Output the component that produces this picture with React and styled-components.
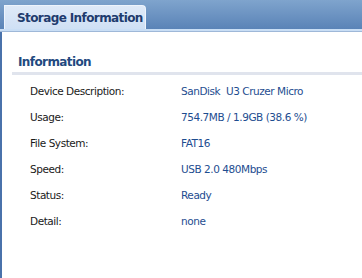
import React from "react";
import styled, { createGlobalStyle } from "styled-components";

const Global = createGlobalStyle`
  html, body { margin: 0; padding: 0; background: #fff; }
  body { font-family: "DejaVu Sans", Verdana, sans-serif; }
`;

const rows = [
  ["Device Description:", "SanDisk\u00a0 U3 Cruzer Micro"],
  ["Usage:", "754.7MB / 1.9GB (38.6 %)"],
  ["File System:", "FAT16"],
  ["Speed:", "USB 2.0 480Mbps"],
  ["Status:", "Ready"],
  ["Detail:", "none"],
];

export default function App() {
  return (
    <Page>
      <Global />
      <TabBar>
        <Tab>Storage Information</Tab>
      </TabBar>
      <Body>
        <Section>Information</Section>
        <Rule />
        <Table>
          {rows.map(([k, v]) => (
            <Row key={k}>
              <Label>{k}</Label>
              <Value>{v}</Value>
            </Row>
          ))}
        </Table>
      </Body>
    </Page>
  );
}

const Page = styled.div`
  width: 362px;
  height: 278px;
  display: flex;
  flex-direction: column;
  overflow: hidden;
`;

const TabBar = styled.div`
  height: 29px;
  display: flex;
  align-items: flex-end;
  padding-left: 4px;
  background: linear-gradient(#7fa4cd, #5a83b7);
  border-bottom: 2px solid #c9def5;
  box-shadow: 0 1px 0 #9fb8d8;
`;

const Tab = styled.div`
  width: 142px;
  height: 24px;
  box-sizing: border-box;
  border: 1px solid #eef4fc;
  border-bottom: none;
  border-radius: 0 4px 0 0;
  background: linear-gradient(#dfeaf8, #cfe0f5);
  color: #1f3c6e;
  font-family: "DejaVu Sans", Verdana, sans-serif;
  font-weight: bold;
  font-size: 12px;
  letter-spacing: -0.6px;
  padding: 5px 0 0 12px;
`;

const Body = styled.div`
  flex: 1;
  margin-top: 1px;
  border-left: 2px solid #4a72ab;
  padding-left: 10px;
`;

const Section = styled.div`
  margin-top: 23px;
  padding-left: 6px;
  color: #1f4a80;
  font-weight: bold;
  font-size: 12px;
  letter-spacing: -0.6px;
`;

const Rule = styled.div`
  height: 3px;
  margin-top: 3px;
  background: #e0e4ed;
`;

const Table = styled.div`
  display: flex;
  flex-direction: column;
  padding-left: 18px;
  margin-top: 10px;
`;

const Row = styled.div`
  display: grid;
  grid-template-columns: 151px 1fr;
  height: 26px;
  font-size: 10.5px;
  letter-spacing: -0.45px;
`;

const Label = styled.div`
  color: #1a1a1a;
`;

const Value = styled.div`
  color: #1e4d90;
`;
